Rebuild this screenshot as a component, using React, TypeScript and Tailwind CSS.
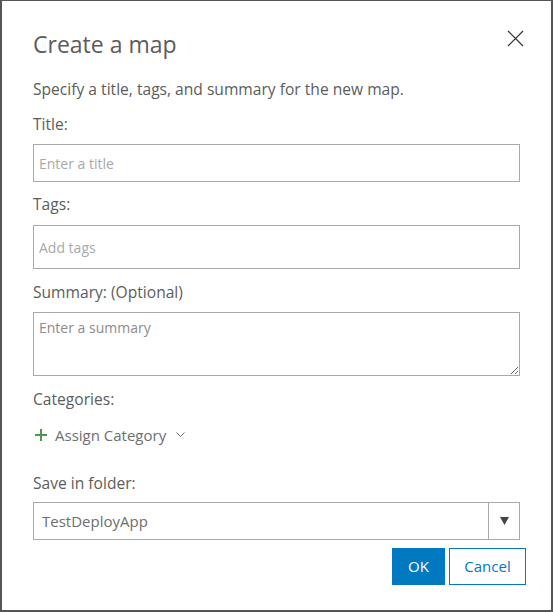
import React from "react";

const font = { fontFamily: "'Open Sans', Lato, Arial, sans-serif" };

function Label({ children, className = "" }: { children: React.ReactNode; className?: string }) {
  return (
    <div className={`h-[20px] text-[15.6px] leading-[20px] text-[#5c5c5c] ${className}`}>{children}</div>
  );
}

export default function App() {
  return (
    <div
      className="w-[553px] h-[612px] bg-[#555555] pt-[1px] pl-[2px] pr-[2px] pb-[2px]"
      style={font}
    >
      <div className="w-full h-full bg-white pl-[31px] pr-[31px] pt-[28px]">
        {/* header */}
        <div className="flex items-start justify-between">
          <h1 className="text-[23px] leading-[30px] text-[#5c5c5c] font-normal">Create a map</h1>
          <button className="mt-[0px] mr-[-4px] w-[18px] h-[18px] flex items-center justify-center">
            <svg width="17" height="17" viewBox="0 0 17 17">
              <path d="M1 1 L16 16 M16 1 L1 16" stroke="#333" strokeWidth="1.2" fill="none" />
            </svg>
          </button>
        </div>
        <Label className="mt-[20px]">Specify a title, tags, and summary for the new map.</Label>

        <Label className="mt-[15px]">Title:</Label>
        <input
          className="mt-[10px] block w-full h-[38px] border border-[#a9a9a9] px-[5px] text-[14px] text-[#595959] placeholder:text-[#a9a9a9] outline-none"
          placeholder="Enter a title"
          style={font}
        />

        <Label className="mt-[12px]">Tags:</Label>
        <input
          className="mt-[11px] block w-full h-[44px] border border-[#a9a9a9] px-[5px] text-[14px] text-[#595959] placeholder:text-[#a9a9a9] outline-none"
          placeholder="Add tags"
          style={font}
        />

        <Label className="mt-[13px]">Summary: (Optional)</Label>
        <textarea
          className="mt-[10px] block w-full h-[64px] border border-[#a9a9a9] px-[5px] py-[6px] text-[14px] leading-[18px] text-[#595959] placeholder:text-[#8c8c8c] outline-none"
          placeholder="Enter a summary"
          style={font}
        />

        <Label className="mt-[13px]">Categories:</Label>
        <div className="mt-[16px] h-[20px] flex items-center text-[15px] leading-[20px] text-[#6e6e6e]">
          <svg width="12" height="12" viewBox="0 0 12 12" className="ml-[2px]">
            <path d="M6 0 V12 M0 6 H12" stroke="#4d9a4d" strokeWidth="2" fill="none" />
          </svg>
          <span className="ml-[8px]">Assign Category</span>
          <svg width="9" height="6" viewBox="0 0 9 6" className="ml-[10px]">
            <path d="M0.5 0.5 L4.5 4.5 L8.5 0.5" stroke="#6e6e6e" strokeWidth="1" fill="none" />
          </svg>
        </div>

        <Label className="mt-[28px]">Save in folder:</Label>
        <div className="mt-[9px] flex h-[38px] w-full border border-[#a9a9a9]">
          <div className="flex-1 flex items-center pl-[8px] text-[15px] text-[#6e6e6e]">TestDeployApp</div>
          <div className="w-[31px] border-l border-[#a9a9a9] flex items-center justify-center">
            <svg width="9" height="8" viewBox="0 0 9 8">
              <path d="M0 0 H9 L4.5 8 Z" fill="#444" />
            </svg>
          </div>
        </div>

        <div className="mt-[8px] flex justify-end gap-[4px] mr-[-6px]">
          <button className="w-[53px] h-[37px] bg-[#0079c1] text-white text-[15px]" style={font}>
            OK
          </button>
          <button
            className="w-[77px] h-[37px] border border-[#0079c1] bg-white text-[#0079c1] text-[15px]"
            style={font}
          >
            Cancel
          </button>
        </div>
      </div>
    </div>
  );
}
